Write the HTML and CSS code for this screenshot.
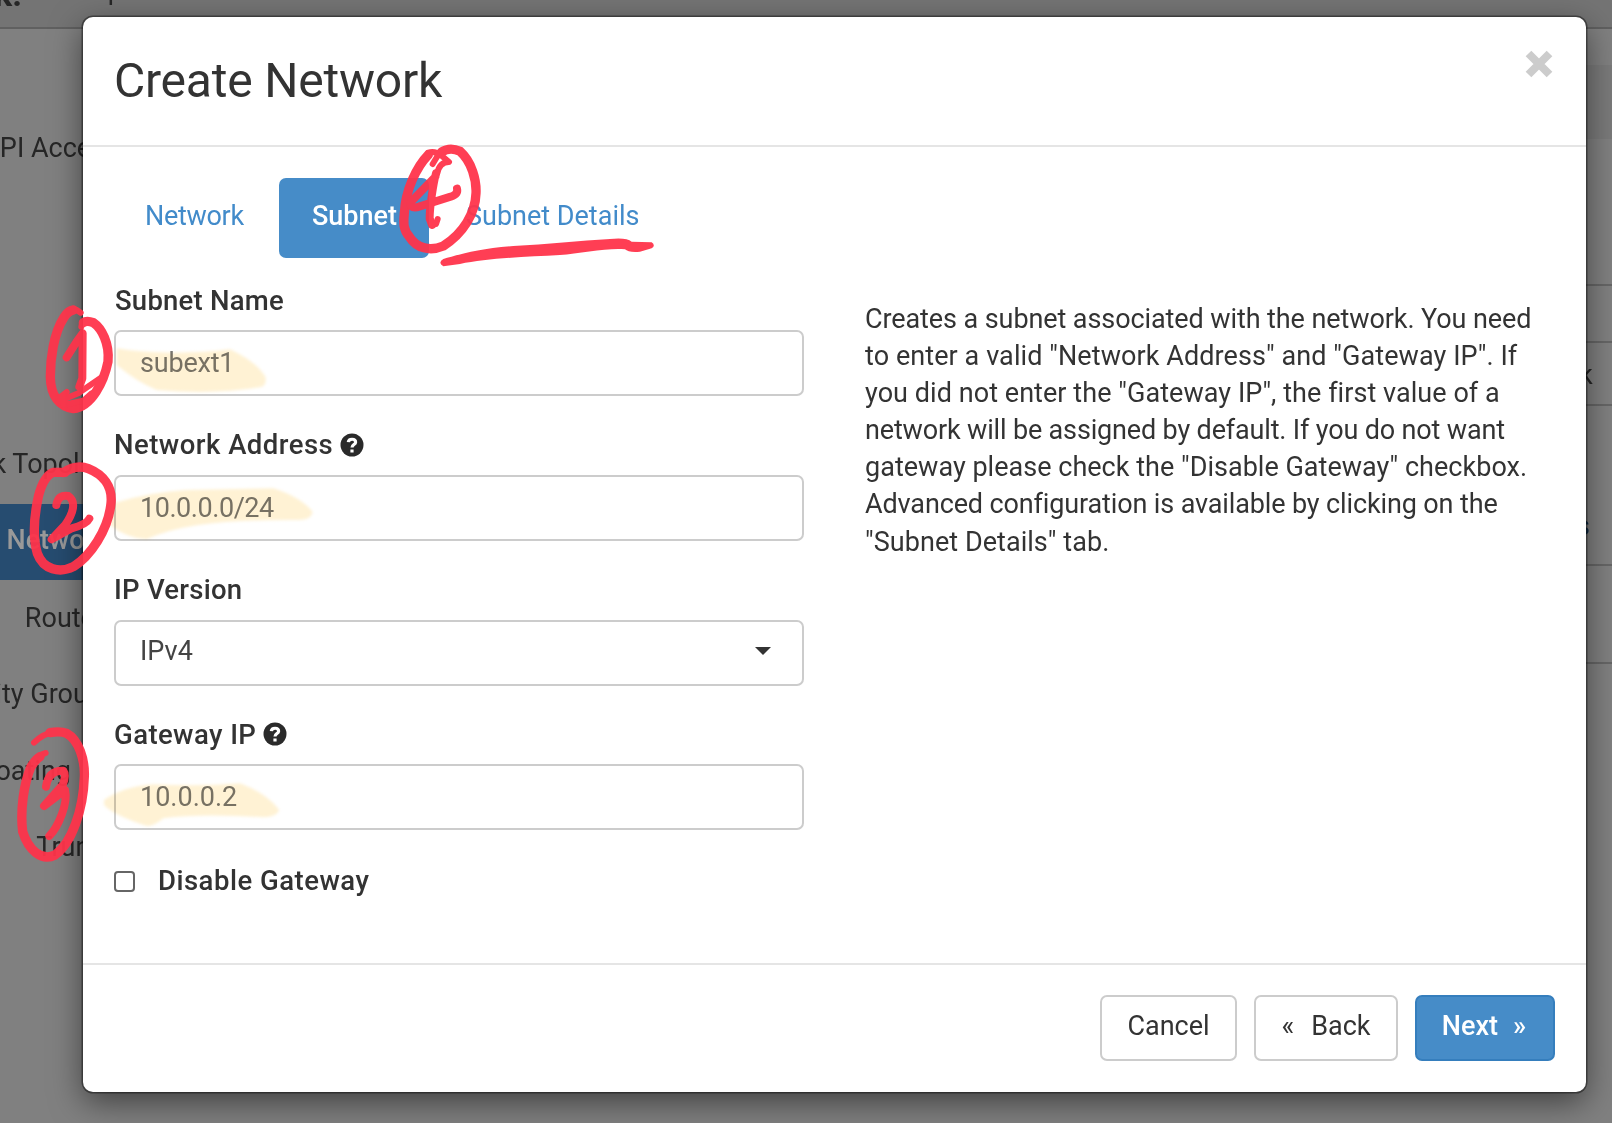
FILE: index.html
```html
<!DOCTYPE html>
<html lang="en">
<head>
<meta charset="utf-8">
<title>Create Network</title>
<link rel="stylesheet" href="styles.css">
</head>
<body>
<div class="page">
  <header class="topbar"><span class="brand">k.</span><span class="project">Expect</span></header>
  <div class="workspace">
    <nav class="sidebar">
      <a class="side-item api">API Access</a>
      <a class="side-item topo">Network Topology</a>
      <a class="side-item current">Networks</a>
      <a class="side-item">Routers</a>
      <a class="side-item groups">Security Groups</a>
      <a class="side-item floating">Floating IPs</a>
      <a class="side-item">Trunks</a>
    </nav>
    <div class="table-edge">
      <div class="cell c1"></div><div class="cell c2"></div><div class="cell c3"></div>
      <div class="cell c4"></div><div class="cell c5">k</div><div class="cell c6">s</div><div class="cell c7"></div>
    </div>
  </div>
</div>

<section class="modal">
  <header class="modal-header">
    <h1>Create Network</h1>
    <svg class="close" viewBox="0 0 28 28"><path d="M3.500 3.500L24.500 24.500M24.500 3.500L3.500 24.500"/></svg>
  </header>
  <div class="modal-body">
    <nav class="tabs">
      <a class="tab t1">Network</a><a class="tab t2 active">Subnet</a><a class="tab t3">Subnet Details</a>
    </nav>
    <div class="columns">
      <form class="form">
        <div class="group"><label><span class="l1">Subnet Name</span></label><div class="input"><span class="v1">subext1</span></div></div>
        <div class="group"><label><span class="l2">Network Address</span><svg class="help" viewBox="0 0 24 24"><circle cx="12" cy="12" r="11.500"/><path d="M8.300 9.200C8.700 5.200 15.600 5.300 15.600 9.200C15.600 11.600 12 11.600 12 14.500M12 16.400V19.400"/></svg></label><div class="input"><span class="v2">10.0.0.0/24</span></div></div>
        <div class="group"><label><span class="l3">IP Version</span></label><div class="input select"><span class="v3">IPv4</span><i class="caret"></i></div></div>
        <div class="group"><label><span class="l4">Gateway IP</span><svg class="help" viewBox="0 0 24 24"><circle cx="12" cy="12" r="11.500"/><path d="M8.300 9.200C8.700 5.200 15.600 5.300 15.600 9.200C15.600 11.600 12 11.600 12 14.500M12 16.400V19.400"/></svg></label><div class="input"><span class="v4">10.0.0.2</span></div></div>
        <div class="check"><i class="box"></i><span class="l5">Disable Gateway</span></div>
      </form>
      <p class="help-text"><span class="d1">Creates a subnet associated with the network. You need</span><span class="d2">to enter a valid "Network Address" and "Gateway IP". If</span><span class="d3">you did not enter the "Gateway IP", the first value of a</span><span class="d4">network will be assigned by default. If you do not want</span><span class="d5">gateway please check the "Disable Gateway" checkbox.</span><span class="d6">Advanced configuration is available by clicking on the</span><span class="d7">"Subnet Details" tab.</span></p>
    </div>
  </div>
  <footer class="modal-footer">
    <button class="btn cancel">Cancel</button>
    <button class="btn back"><span class="chev">«</span>Back</button>
    <button class="btn next">Next<span class="chev">»</span></button>
  </footer>
</section>

<svg class="marker" viewBox="0 0 1612 1123">
  <g transform="translate(0 280) scale(.33333)">
    <path d="M350 205Q430 218 520 218Q620 218 690 208Q770 245 797 292Q800 318 780 322Q640 345 470 330Q410 305 350 255Z"/>
    <path d="M345 668Q460 635 560 630L820 625Q900 650 938 695Q935 718 900 720Q700 718 590 736Q500 750 440 778Q380 775 330 735Z"/>
  </g>
  <g transform="translate(0 570) scale(.33333)">
    <path d="M312 690Q370 650 460 643Q600 650 720 640Q800 670 838 720Q830 742 790 742Q600 730 490 745Q460 770 440 768Q340 735 312 705Z"/>
  </g>
</svg>
<svg class="pen" viewBox="0 0 1612 1123">
  <g transform="translate(380 130) scale(.33333)">
    <path class="w27" d="M185 66Q210 50 240 64C275 95 290 150 288 190C286 250 250 310 190 348C150 365 110 355 88 320C70 300 70 280 73 250C76 180 110 110 145 74"/>
    <path class="w16" d="M158 102L180 66M145 68Q165 62 185 77L207 96Q178 96 172 130M168 282L173 267"/>
    <path class="w24" d="M166 140L93 215Q88 235 110 232L212 200Q235 192 231 176M168 130C160 160 149 230 149 265L156 285"/>
    <path class="fill" d="M190 387C230 375 300 355 400 348C500 343 600 332 690 327Q740 322 755 335L815 337Q828 347 815 355L780 365Q745 368 735 358C690 352 600 370 540 375C440 380 320 385 240 402L190 409Q172 398 190 387Z"/>
  </g>
  <g transform="translate(0 280) scale(.33333)">
    <path class="w16" d="M242 98Q222 80 203 94M244 140Q246 118 270 125"/>
    <path class="w27" d="M220 90Q205 92 192 112C160 160 151 240 151 290C152 350 180 380 220 386C275 380 312 305 324 245C329 190 305 145 280 128Q260 120 250 128"/>
    <path class="w24" d="M200 232L230 185L248 160L247 295L238 320"/>
    <path class="w16" d="M180 352L200 336M180 362L235 340L305 292M190 375L250 362L275 340"/>
    <path class="w27" d="M190 578Q230 552 265 566C310 584 338 620 333 670C325 750 270 830 220 860C180 880 130 870 112 820C100 780 100 720 115 650Q130 590 160 577L195 577"/>
    <path class="w24" d="M169 675Q175 642 205 648C230 665 220 700 195 735L155 778L215 745Q260 733 268 716"/>
  </g>
  <g transform="translate(0 570) scale(.33333)">
    <path class="w16" d="M102 518Q130 490 165 486M90 592Q110 555 137 549"/>
    <path class="w27" d="M150 488Q180 482 200 490C237 510 255 570 253 620C250 720 215 820 165 855C125 875 85 840 68 785C60 720 72 640 92 592Q105 570 120 560"/>
    <path class="w24" d="M138 650Q145 600 190 602Q200 615 188 645L132 708L195 660C205 700 175 770 148 798"/>
  </g>
</svg>
</body>
</html>
```

FILE: styles.css
```css
* { box-sizing: border-box; }
body { margin: 0; width: 1612px; height: 1123px; overflow: hidden; font-family: Roboto, sans-serif; font-size: 27px; color: #333; background: #808080; position: relative; }
span { white-space: nowrap; }
.page { height: 1123px; overflow: hidden; color: #262626; }
.topbar { height: 29px; background: #747474; border-bottom: 2px solid #606060; display: flex; gap: 57px; line-height: 30px; overflow: hidden; }
.brand { font-weight: 700; margin-top: -21px; font-size: 34px; margin-left: -6px; }
.project { margin-top: -25px; }
.workspace { display: flex; justify-content: space-between; }
.sidebar { width: 124px; display: flex; flex-direction: column; padding-top: 81px; }
.side-item { display: flex; justify-content: flex-end; align-items: center; height: 76.300px; flex: none; white-space: nowrap; padding-right: 6px; }
.api { margin-bottom: 241px; padding-right: 5px; }
.topo { padding-right: 1px; padding-bottom: 2px; }
.groups { padding-right: 7px; }
.floating { padding-right: 8px; }
.current { background: #264c70; color: #999; font-weight: 500; padding: 0 2px 3px 0; }
.table-edge { width: 29px; }
.cell { border-bottom: 2px solid #666; display: flex; align-items: center; }
.c1 { height: 36px; border: 0; } .c2 { height: 74px; background: #7a7a7a; border: 0; }
.c3 { height: 147px; } .c4 { height: 57px; }
.c5 { height: 63px; padding: 2px 0 0; margin-left: -4px; }
.c6 { height: 160px; align-items: flex-end; padding-bottom: 22px; margin-left: -7px; color: #12314d; }
.c7 { height: 98px; }
.modal { position: absolute; left: 83px; top: 17px; width: 1503px; height: 1075px; background: #fff; border-radius: 10px; box-shadow: 0 0 0 1.500px rgba(0,0,0,.4), 0 10px 32px rgba(0,0,0,.5); display: flex; flex-direction: column; }
.modal-header { height: 130px; border-bottom: 2px solid #e5e5e5; padding: 31px 33px 0 31px; display: flex; justify-content: space-between; }
h1 { margin: 0; font-size: 48px; font-weight: 400; line-height: 66px; letter-spacing: -.22px; }
.close { width: 28px; height: 28px; margin-top: 2px; }
.close path { stroke: #ccc; stroke-width: 8; fill: none; }
.modal-body { height: 815.500px; padding: 31px 31px 0; }
.tabs { display: flex; height: 80px; color: #428bca; }
.tab { display: flex; align-items: center; padding-bottom: 4px; white-space: nowrap; }
.t1 { width: 165px; padding-left: 31px; letter-spacing: -.3px; }
.t2 { width: 150px; padding-left: 33px; margin-right: 4px; border-radius: 7px; }
.t3 { padding-left: 33px; }
.active { background: #468cc8; color: #fff; font-weight: 500; }
.columns { display: flex; }
.form { width: 690px; padding-top: 24px; }
.group { height: 144.800px; }
label { display: flex; align-items: center; gap: 7px; height: 36px; font-weight: 500; font-size: 27.500px; }
.input { margin-top: 12px; height: 66px; border: 2px solid #ccc; border-radius: 7px; display: flex; align-items: center; padding: 0 31px 0 24px; color: #777; }
.select { color: #444; justify-content: space-between; padding-bottom: 3px; }
.caret { border: 8px solid transparent; border-top-color: #333; border-bottom: 0; margin-top: -1px; }
.help { width: 24px; height: 24px; }
.help circle { fill: #2a2a2a; } .help path { stroke: #fff; stroke-width: 3.200; fill: none; }
.check { display: flex; align-items: center; gap: 23px; height: 36px; font-weight: 500; font-size: 27.500px; padding-top: 2px; }
.box { width: 21px; height: 21px; border: 2px solid #666; border-radius: 4px; margin-top: 2px; }
.l1 { letter-spacing: .22px; padding-left: 1px; } .l2 { letter-spacing: .48px; } .l3 { letter-spacing: .25px; }
.l4 { letter-spacing: .42px; } .l5 { letter-spacing: .5px; }
.v1 { letter-spacing: -.2px; } .v2 { letter-spacing: -.45px; }
.help-text { margin: 43px 0 0 61px; line-height: 37.100px; display: flex; flex-direction: column; align-items: flex-start; }
.d1 { letter-spacing: -.09px; } .d2 { letter-spacing: .08px; } .d3 { letter-spacing: .055px; } .d4 { letter-spacing: -.16px; }
.d5 { letter-spacing: .02px; } .d6 { letter-spacing: -.13px; } .d7 { letter-spacing: .05px; }
.modal-footer { border-top: 2px solid #e5e5e5; flex: 1; padding: 30px 31px 0; display: flex; justify-content: flex-end; gap: 17px; }
.btn { font: inherit; height: 66px; border: 2px solid #ccc; border-radius: 7px; background: #fff; color: #333; padding: 0 0 3px; display: flex; align-items: center; justify-content: center; gap: 17px; }
.cancel { width: 137px; } .back { width: 144px; }
.next { width: 140px; background: #468cc8; border-color: #357ebd; color: #fff; font-weight: 500; gap: 15px; padding-right: 2px; }
.marker, .pen { position: absolute; left: 0; top: 0; width: 1612px; height: 1123px; }
.marker { fill: #fff2d4; mix-blend-mode: multiply; filter: blur(1.500px); }
.pen { opacity: .94; }
.pen path { fill: none; stroke: #ff334a; stroke-linecap: round; stroke-linejoin: round; }
.pen .w27 { stroke-width: 28px; } .pen .w24 { stroke-width: 24px; } .pen .w16 { stroke-width: 18px; }
.pen .fill { fill: #ff334a; stroke: none; }
```
